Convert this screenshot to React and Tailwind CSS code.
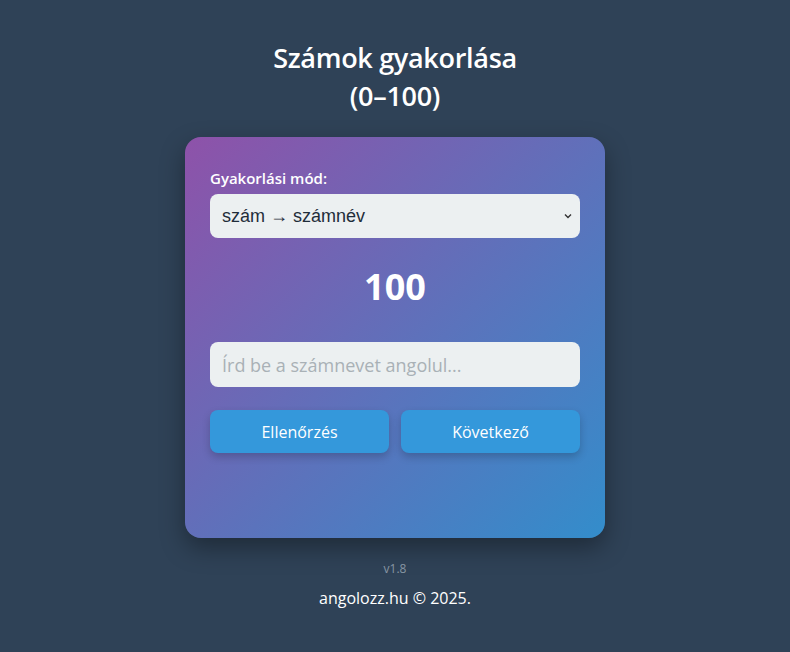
import React, { useState } from 'react';

const App = () => {
  const [mode, setMode] = useState('num2word');
  const [answer, setAnswer] = useState('');

  return (
    <div
      className="min-h-[652px] bg-[#2f4257] flex flex-col items-center text-white"
      style={{ fontFamily: '"Open Sans", "Noto Sans", sans-serif' }}
    >
      <h1 className="mt-[39px] w-[262px] text-center text-[27px] leading-[38px] font-semibold tracking-[-0.3px]">
        Számok gyakorlása (0–100)
      </h1>

      <div className="mt-[22px] w-[420px] h-[401px] rounded-2xl bg-[linear-gradient(135deg,#8e52a9,#338dcb)] px-[25px] pt-[31px] shadow-[0_10px_25px_rgba(0,0,0,0.35)]">
        <label htmlFor="mode" className="block text-[15px] font-semibold leading-[20px]">
          Gyakorlási mód:
        </label>
        <div className="relative mt-[6px]">
          <select
            id="mode"
            value={mode}
            onChange={(e) => setMode(e.target.value)}
            className="appearance-none w-full h-[44px] rounded-lg bg-[#ecf0f1] text-[#1f2d3a] pl-[12px] pr-8 text-[18px] outline-none"
            style={{ fontFamily: '"Liberation Sans", Arial, sans-serif' }}
          >
            <option value="num2word">szám → számnév</option>
            <option value="word2num">számnév → szám</option>
          </select>
          <svg
            className="pointer-events-none absolute right-[8px] top-[19px]"
            width="8"
            height="6"
            viewBox="0 0 8 6"
            fill="none"
            stroke="#333"
            strokeWidth="1.4"
          >
            <path d="M1 1.5 L4 4.5 L7 1.5" />
          </svg>
        </div>

        <div className="mt-[27px] text-center text-[36px] font-bold leading-[44px]">100</div>

        <input
          type="text"
          value={answer}
          onChange={(e) => setAnswer(e.target.value)}
          placeholder="Írd be a számnevet angolul..."
          className="mt-[33px] w-full h-[45px] rounded-lg bg-[#ecf0f1] text-[#1f2d3a] px-[12px] text-[18px] outline-none placeholder:text-[#a9b1b6]"
        />

        <div className="mt-[23px] grid grid-cols-2 gap-[12px]">
          <button className="h-[43px] rounded-lg bg-[#3498db] text-[16px] shadow-[0_4px_8px_rgba(0,0,0,0.2)]">
            Ellenőrzés
          </button>
          <button className="h-[43px] rounded-lg bg-[#3498db] text-[16px] shadow-[0_4px_8px_rgba(0,0,0,0.2)]">
            Következő
          </button>
        </div>
      </div>

      <div className="mt-[22px] text-[12px] text-[#8796a3]">v1.8</div>
      <div className="mt-[8px] text-[16px]">angolozz.hu © 2025.</div>
    </div>
  );
};

export default App;
